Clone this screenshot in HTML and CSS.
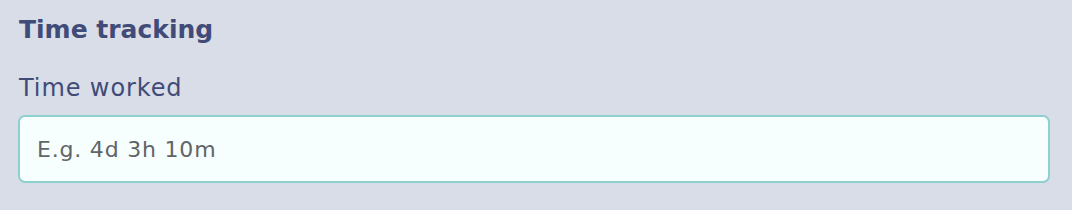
FILE: index.html
```html
<!DOCTYPE html>
<html lang="en">
<head>
<meta charset="UTF-8" />
<title>Time tracking</title>
<link rel="stylesheet" href="styles.css">
</head>
<body>

<div class="panel">
  <h2 class="panel-title">Time tracking</h2>
  <label class="field-label" for="timeWorked">Time worked</label>
  <input class="field-input" id="timeWorked" type="text" placeholder="E.g. 4d 3h 10m" />
</div>

</body>
</html>
```

FILE: styles.css
```css
* {
  box-sizing: border-box;
}
body {
  margin: 0;
  padding: 0;
  background: #d9dde8;
  font-family: "DejaVu Sans", "Noto Sans", sans-serif;
}

.panel {
  padding: 14px 22px 0 18px;
  display: flex;
  flex-direction: column;
}

.panel-title {
  margin: 0 0 0 1px;
  font-size: 25px;
  font-weight: 700;
  line-height: 32px;
  color: #414b77;
}

.field-label {
  margin: 26px 0 0 1px;
  font-size: 24px;
  letter-spacing: 0.9px;
  line-height: 32px;
  color: #414b77;
}

.field-input {
  margin-top: 11px;
  height: 68px;
  width: 100%;
  padding: 0 17px;
  background: #f6fffe;
  border: 2px solid #8ecfd0;
  border-radius: 7px;
  font-family: inherit;
  font-size: 22px;
  letter-spacing: 0.8px;
  color: #333;
  outline: none;
}
.field-input::placeholder {
  color: #616468;
}
```
